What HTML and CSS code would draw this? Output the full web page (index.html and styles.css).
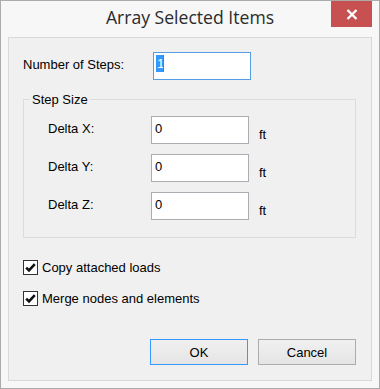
FILE: index.html
```html
<!DOCTYPE html>
<html lang="en">
<head>
    <meta charset="UTF-8">
    <meta name="viewport" content="width=device-width, initial-scale=1.0">
    <title>Array Selected Items</title>
    <link rel="stylesheet" href="styles.css">
</head>
<body>
    <div class="window">
        <div class="titlebar">
            <span class="title">Array Selected Items</span>
            <button class="close-btn" aria-label="Close">
                <svg width="12" height="11" viewBox="0 0 12 11">
                    <path d="M1.5 1 L10.5 10 M10.5 1 L1.5 10" stroke="#fff" stroke-width="2.4" fill="none"/>
                </svg>
            </button>
        </div>

        <div class="client">
            <!-- Number of steps -->
            <div class="steps-row">
                <label class="field-label">Number of Steps:</label>
                <div class="textbox focused"><span class="sel">1</span><span class="caret"></span></div>
            </div>

            <!-- Step size group -->
            <fieldset class="group">
                <legend>Step Size</legend>
                <div class="delta-row">
                    <label class="field-label">Delta X:</label>
                    <div class="textbox">0</div>
                    <span class="unit">ft</span>
                </div>
                <div class="delta-row">
                    <label class="field-label">Delta Y:</label>
                    <div class="textbox">0</div>
                    <span class="unit">ft</span>
                </div>
                <div class="delta-row">
                    <label class="field-label">Delta Z:</label>
                    <div class="textbox">0</div>
                    <span class="unit">ft</span>
                </div>
            </fieldset>

            <!-- Options -->
            <div class="checks">
                <label class="check">
                    <span class="box">
                        <svg width="13" height="13" viewBox="0 0 13 13">
                            <path d="M2.2 6.6 L5 9.4 L10.8 3.2" stroke="#111" stroke-width="2.6" fill="none"/>
                        </svg>
                    </span>
                    Copy attached loads
                </label>
                <label class="check">
                    <span class="box">
                        <svg width="13" height="13" viewBox="0 0 13 13">
                            <path d="M2.2 6.6 L5 9.4 L10.8 3.2" stroke="#111" stroke-width="2.6" fill="none"/>
                        </svg>
                    </span>
                    Merge nodes and elements
                </label>
            </div>

            <div class="buttons">
                <button class="btn default">OK</button>
                <button class="btn">Cancel</button>
            </div>
        </div>
    </div>
</body>
</html>
```

FILE: styles.css
```css
body {
    margin: 0;
    font-family: "Liberation Sans", Arial, sans-serif;
    font-size: 13px;
    color: #000;
}
.window {
    width: 380px;
    height: 389px;
    box-sizing: border-box;
    border: 1px solid #ababab;
    background-color: #f7f7f7;
    display: flex;
    flex-direction: column;
}
.titlebar {
    height: 36px;
    display: grid;
    grid-template-columns: 1fr auto 1fr;
}
.title {
    grid-column: 2;
    font-family: "Open Sans", "Noto Sans", sans-serif;
    font-size: 17.6px;
    color: #2b2b2b;
    padding-top: 4px;
}
.close-btn {
    grid-column: 3;
    justify-self: end;
    align-self: start;
    width: 41px;
    height: 26px;
    margin-right: 7px;
    padding: 0;
    border: none;
    background-color: #c75050;
    display: flex;
    align-items: center;
    justify-content: center;
}
.client {
    flex: 1;
    margin: 0 7px 7px;
    border: 1px solid #d9d9d9;
    background-color: #f0f0f0;
    padding: 14px 15px 15px 14px;
    display: flex;
    flex-direction: column;
}
.field-label {
    padding-top: 5px;
}
.textbox {
    box-sizing: border-box;
    width: 98px;
    height: 28px;
    border: 1px solid #abadb3;
    background-color: #fff;
    padding: 4px 3px;
    line-height: 15px;
    display: flex;
    align-items: flex-start;
}
.textbox.focused {
    border-color: #569de5;
    padding: 2px 2px;
}
.sel {
    background-color: #3399ff;
    color: #fff;
    line-height: 16px;
    padding: 1px 0 0 1px;
    width: 6px;
}
.caret {
    width: 1px;
    height: 17px;
    background-color: #b5651d;
}
.steps-row {
    display: grid;
    grid-template-columns: 130px 98px;
}
.group {
    margin: 12px 0 0;
    padding: 9px 0 17px 6px;
    border: 1px solid #dcdcdc;
    display: flex;
    flex-direction: column;
    gap: 10px;
}
.group legend {
    padding: 0 2px;
    line-height: 15px;
}
.delta-row {
    display: grid;
    grid-template-columns: 103px 98px auto;
    padding-left: 18px;
}
.unit {
    margin-left: 10px;
    padding-top: 11px;
}
.checks {
    margin-top: 22px;
    display: flex;
    flex-direction: column;
    gap: 16px;
}
.check {
    display: flex;
    align-items: center;
    height: 15px;
}
.box {
    box-sizing: border-box;
    width: 15px;
    height: 15px;
    border: 1px solid #333;
    background-color: #fff;
    margin-right: 4px;
    display: flex;
    align-items: center;
    justify-content: center;
}
.buttons {
    margin-top: auto;
    display: flex;
    justify-content: flex-end;
    gap: 10px;
}
.btn {
    width: 98px;
    height: 26px;
    font-family: "Liberation Sans", Arial, sans-serif;
    font-size: 13px;
    color: #000;
    border: 1px solid #acacac;
    background: linear-gradient(#f0f0f0, #e5e5e5);
    padding: 0;
}
.btn.default {
    border-color: #3399ff;
}
```
